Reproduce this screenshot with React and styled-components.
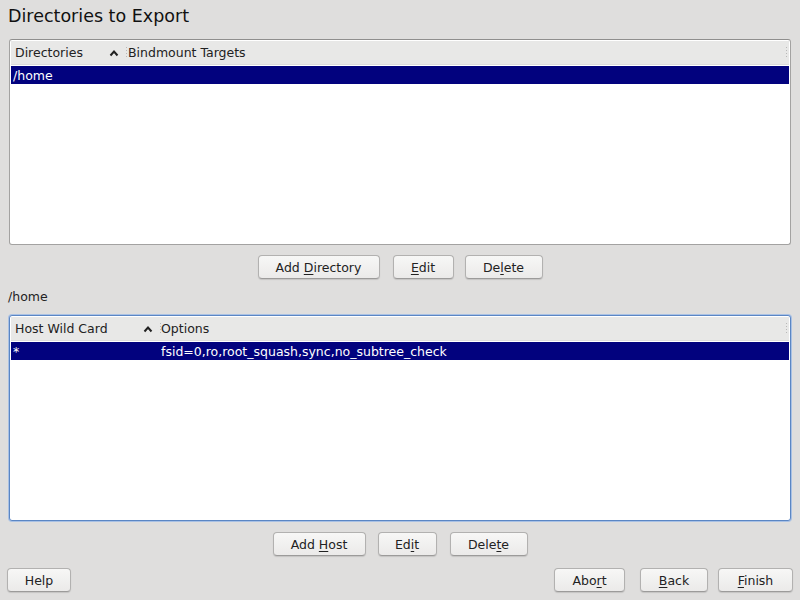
import styled, { createGlobalStyle } from "styled-components";

const Global = createGlobalStyle`
  html, body { margin: 0; padding: 0; }
  body {
    background: #dfdedd;
    font-family: "DejaVu Sans", "Liberation Sans", sans-serif;
    font-size: 12.5px;
    color: #222;
  }
`;

const Page = styled.div`
  width: 800px;
  height: 600px;
  display: flex;
  flex-direction: column;
  box-sizing: border-box;
`;

const Title = styled.h1`
  margin: 0;
  padding: 5px 0 0 8px;
  height: 34px;
  box-sizing: border-box;
  font-size: 17.5px;
  font-weight: normal;
  color: #111;
  line-height: 22px;
`;

const Table = styled.div`
  margin: 5px 9px 0 9px;
  height: ${(p) => p.h}px;
  box-sizing: border-box;
  border: 1px solid ${(p) => (p.focused ? "#5b86c4" : "#a3a2a1")};
  border-top-color: ${(p) => (p.focused ? "#5b86c4" : "#8f8e8d")};
  border-radius: 3px;
  background: #fff;
  padding: 1px;
  box-shadow: ${(p) => (p.focused ? "0 0 0 1px #a9c1e4" : "none")};
  overflow: hidden;
`;

const Header = styled.div`
  display: flex;
  align-items: center;
  height: 23px;
  background: #e8e8e7;
  border-bottom: 1px solid #dcdcdb;
  position: relative;
  margin-bottom: 1px;
`;

const HeadCell = styled.div`
  width: ${(p) => (p.w ? `${p.w}px` : "auto")};
  flex: ${(p) => (p.w ? "none" : "1")};
  box-sizing: border-box;
  padding-left: ${(p) => p.pl ?? 4}px;
  display: flex;
  align-items: center;
  justify-content: space-between;
  position: relative;
  height: 100%;
`;

const Sep = styled.span`
  width: 1px;
  height: 12px;
  background-image: linear-gradient(#b8b8b8 50%, transparent 50%);
  background-size: 1px 3px;
`;

const Arrow = styled.svg`
  width: 10px;
  height: 8px;
  margin-right: 7px;
  margin-left: auto;
`;

const Row = styled.div`
  display: flex;
  align-items: center;
  height: 18px;
  background: ${(p) => (p.selected ? "#02027e" : "transparent")};
  color: ${(p) => (p.selected ? "#fff" : "#222")};
`;

const Cell = styled.div`
  width: ${(p) => (p.w ? `${p.w}px` : "auto")};
  flex: ${(p) => (p.w ? "none" : "1")};
  padding-left: ${(p) => p.pl ?? 3}px;
  box-sizing: border-box;
  white-space: nowrap;
`;

const ButtonRow = styled.div`
  display: flex;
  justify-content: ${(p) => p.justify || "center"};
  margin-top: ${(p) => p.mt ?? 11}px;
  padding: ${(p) => p.pad || "0"};
`;

const Button = styled.button`
  width: ${(p) => p.w}px;
  height: 24px;
  margin-left: ${(p) => p.ml ?? 0}px;
  font-family: inherit;
  font-size: 12.5px;
  color: #222;
  border: 1px solid #b2b1b0;
  border-bottom-color: #9c9b9a;
  border-radius: 4px;
  background: linear-gradient(#f7f7f6, #ebeae9);
  box-shadow: 0 1px 1px rgba(0, 0, 0, 0.12);
  padding: 0;
  u { text-decoration-thickness: 1px; text-underline-offset: 2px; }
`;

const Spacer = styled.div`
  flex: 1;
`;

const PathLabel = styled.div`
  padding: 11px 0 0 8px;
  height: 31px;
  box-sizing: border-box;
  line-height: 14px;
`;

const SortArrow = () => (
  <Arrow viewBox="0 0 10 8">
    <path d="M1.5 6.5 L5 2.5 L8.5 6.5" fill="none" stroke="#222" strokeWidth="2" />
  </Arrow>
);

const EdgeSep = styled.span`
  position: absolute;
  right: 2px;
  top: 6px;
  width: 1px;
  height: 12px;
  background-image: linear-gradient(#b8b8b8 50%, transparent 50%);
  background-size: 1px 3px;
`;

export default function App() {
  return (
    <Page>
      <Global />
      <Title>Directories to Export</Title>
      <Table h={206}>
        <Header>
          <HeadCell w={116}>
            Directories
            <SortArrow />
            <Sep />
          </HeadCell>
          <HeadCell pl={1}>Bindmount Targets</HeadCell>
          <EdgeSep />
        </Header>
        <Row selected>
          <Cell pl={2}>/home</Cell>
        </Row>
      </Table>
      <ButtonRow mt={10}>
        <Button w={122}>Add <u>D</u>irectory</Button>
        <Button w={61} ml={13}><u>E</u>dit</Button>
        <Button w={78} ml={11}>De<u>l</u>ete</Button>
      </ButtonRow>
      <PathLabel>/home</PathLabel>
      <Table h={206} focused>
        <Header>
          <HeadCell w={150}>
            Host Wild Card
            <SortArrow />
            <Sep />
          </HeadCell>
          <HeadCell pl={0}>Options</HeadCell>
          <EdgeSep />
        </Header>
        <Row selected>
          <Cell w={150} pl={2}>*</Cell>
          <Cell pl={0}>fsid=0,ro,root_squash,sync,no_subtree_check</Cell>
        </Row>
      </Table>
      <ButtonRow mt={11}>
        <Button w={93}>Add <u>H</u>ost</Button>
        <Button w={59} ml={12}>Ed<u>i</u>t</Button>
        <Button w={78} ml={13}>Dele<u>t</u>e</Button>
      </ButtonRow>
      <ButtonRow mt={12} justify="flex-start" pad="0 7px 0 7px">
        <Button w={64}>Help</Button>
        <Spacer />
        <Button w={71}>Abo<u>r</u>t</Button>
        <Button w={68} ml={15}><u>B</u>ack</Button>
        <Button w={75} ml={10}><u>F</u>inish</Button>
      </ButtonRow>
    </Page>
  );
}
